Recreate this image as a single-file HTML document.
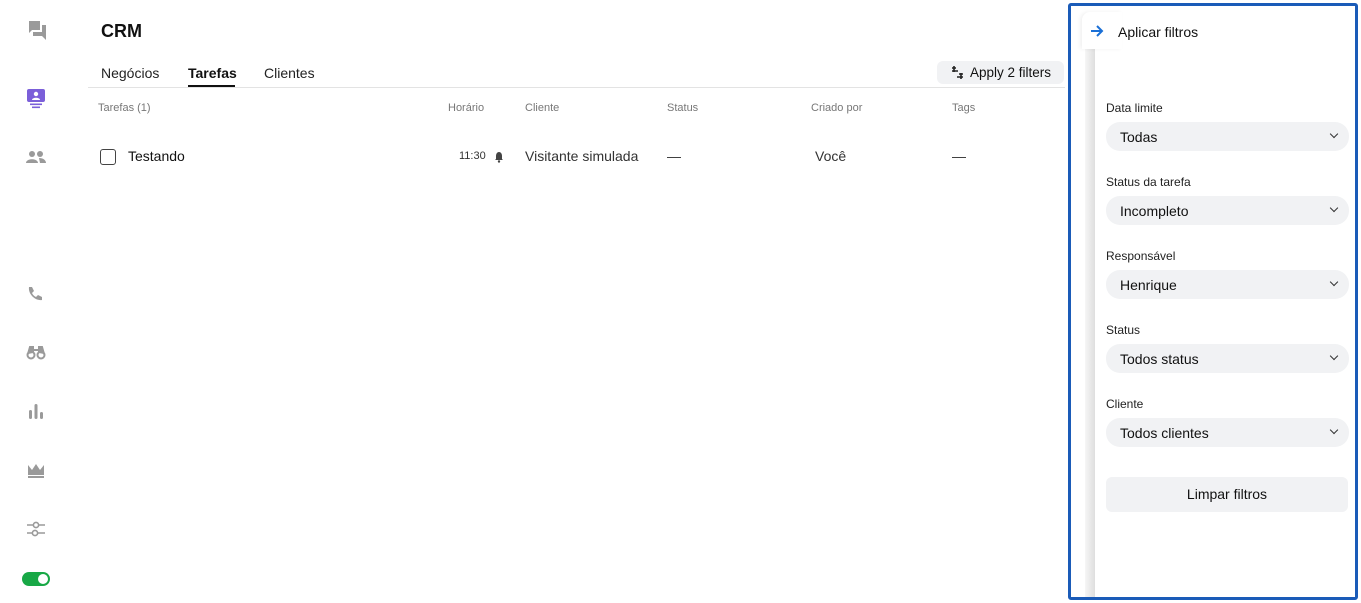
<!DOCTYPE html>
<html><head><meta charset="utf-8"><style>
*{margin:0;padding:0;box-sizing:border-box}
body{width:1361px;height:603px;background:#fff;font-family:"Liberation Sans",sans-serif;position:relative;overflow:hidden;color:#111}
.a{position:absolute}
.ic{position:absolute;left:26px}
.h{font-size:11px;color:#777;top:102px}
.lbl{position:absolute;left:1106px;font-size:12px;color:#222}
.dd{position:absolute;left:1106px;width:243px;height:29px;border-radius:14px;background:#f1f2f4;font-size:14px;padding:7px 14px;color:#111}
.dd:after{content:"";position:absolute;right:12px;top:9px;width:5px;height:5px;border-right:1.6px solid #333;border-bottom:1.6px solid #333;transform:rotate(45deg)}
</style></head><body>
<svg class="ic" style="top:20px" width="22" height="22" viewBox="0 0 22 22"><path d="M1 1h13v9H6l-3 3V1z" fill="#9a9a9a"/><path d="M7 12h9V5h4v15l-4-4H7z" fill="#9a9a9a"/></svg>
<svg class="ic" style="top:88px" width="20" height="22" viewBox="0 0 20 22"><rect x="1" y="1" width="18" height="13" rx="2" fill="#7b5fd9"/><circle cx="10" cy="6" r="2.2" fill="#fff"/><path d="M6 12c0-3 8-3 8 0z" fill="#fff"/><rect x="4" y="15.5" width="12" height="1.6" fill="#7b5fd9"/><rect x="6" y="18.5" width="8" height="1.6" fill="#7b5fd9"/></svg>
<svg class="ic" style="top:150px" width="20" height="14" viewBox="0 0 20 14"><circle cx="6" cy="4" r="3" fill="#9a9a9a"/><circle cx="14" cy="4" r="3" fill="#9a9a9a"/><path d="M0 13c0-5 12-5 12 0zM13 8c4 0 7 2 7 5h-6z" fill="#9a9a9a"/></svg>
<svg class="ic" style="top:285px" width="18" height="18" viewBox="0 0 18 18"><path d="M3 2l3 0 2 4-2 2c1 2 2 3 4 4l2-2 4 2v3c-7 1-14-6-13-13z" fill="#9a9a9a"/></svg>
<svg class="ic" style="top:344px" width="20" height="16" viewBox="0 0 20 16"><circle cx="5" cy="11" r="3.5" fill="none" stroke="#9a9a9a" stroke-width="2"/><circle cx="15" cy="11" r="3.5" fill="none" stroke="#9a9a9a" stroke-width="2"/><path d="M2 10l2-7h3v6M18 10l-2-7h-3v6M7 6h6" stroke="#9a9a9a" stroke-width="2" fill="#9a9a9a"/></svg>
<svg class="ic" style="top:402px" width="20" height="18" viewBox="0 0 20 18"><rect x="3" y="8" width="3" height="9" rx="1.5" fill="#9a9a9a"/><rect x="8.5" y="2" width="3" height="15" rx="1.5" fill="#9a9a9a"/><rect x="14" y="10" width="3" height="7" rx="1.5" fill="#9a9a9a"/></svg>
<svg class="ic" style="top:462px" width="20" height="18" viewBox="0 0 20 18"><path d="M2 3l4 5 4-6 4 6 4-5v10H2z" fill="#9a9a9a"/><rect x="2" y="14" width="16" height="2" fill="#9a9a9a"/></svg>
<svg class="ic" style="top:520px" width="20" height="18" viewBox="0 0 20 18"><path d="M1 5h18M1 13h18" stroke="#9a9a9a" stroke-width="1.6"/><circle cx="10" cy="5" r="2.6" fill="#fff" stroke="#9a9a9a" stroke-width="1.6"/><circle cx="9" cy="13" r="2.6" fill="#fff" stroke="#9a9a9a" stroke-width="1.6"/></svg>
<div class="a" style="left:22px;top:572px;width:28px;height:14px;border-radius:7px;background:#18a846"><div class="a" style="right:2px;top:2px;width:10px;height:10px;border-radius:5px;background:#fff"></div></div>
<div class="a" style="left:101px;top:21px;font-size:18px;font-weight:bold">CRM</div>
<div class="a" style="left:101px;top:65px;font-size:14px;color:#222">Negócios</div>
<div class="a" style="left:188px;top:65px;font-size:14px;font-weight:bold">Tarefas</div>
<div class="a" style="left:188px;top:85px;width:47px;height:2px;background:#111"></div>
<div class="a" style="left:264px;top:65px;font-size:14px;color:#222">Clientes</div>
<div class="a" style="left:88px;top:87px;width:977px;height:1px;background:#e3e3e3"></div>
<div class="a" style="left:937px;top:61px;width:127px;height:23px;border-radius:6px;background:#f1f2f4;font-size:13.5px;padding:4px 0 0 33px;color:#111">Apply 2 filters</div>
<svg class="a" style="left:951px;top:66px" width="13" height="13" viewBox="0 0 13 13"><path d="M1 2h4M1 5h6M8 8h4M6 11h6M3 0v6M10 7v6" stroke="#222" stroke-width="1.6"/></svg>
<div class="a h" style="left:98px">Tarefas (1)</div>
<div class="a h" style="left:448px">Horário</div>
<div class="a h" style="left:525px">Cliente</div>
<div class="a h" style="left:667px">Status</div>
<div class="a h" style="left:811px">Criado por</div>
<div class="a h" style="left:952px">Tags</div>
<div class="a" style="left:100px;top:149px;width:16px;height:16px;border:1.5px solid #444;border-radius:3px"></div>
<div class="a" style="left:128px;top:148px;font-size:14px">Testando</div>
<div class="a" style="left:459px;top:150px;font-size:11px;color:#333">11:30</div>
<svg class="a" style="left:494px;top:151px" width="10" height="12" viewBox="0 0 10 12"><path d="M5 1c2 0 3 2 3 4v3l1 1H1l1-1V5c0-2 1-4 3-4z" fill="#444"/><circle cx="5" cy="10.5" r="1.2" fill="#444"/></svg>
<div class="a" style="left:525px;top:148px;font-size:14px;color:#333">Visitante simulada</div>
<div class="a" style="left:667px;top:148px;font-size:14px;color:#333">—</div>
<div class="a" style="left:815px;top:148px;font-size:14px;color:#333">Você</div>
<div class="a" style="left:952px;top:148px;font-size:14px;color:#333">—</div>
<div class="a" style="left:1068px;top:3px;width:290px;height:597px;border:3px solid #1a5bb8;border-radius:3px;background:#fff"></div>
<div class="a" style="left:1085px;top:48px;width:10px;height:549px;background:linear-gradient(90deg,#f6f6f6,#dedede)"></div>
<div class="a" style="left:1082px;top:12px;width:40px;height:37px;border-radius:8px 0 0 0;background:#fff;box-shadow:-2px 0 4px rgba(0,0,0,.06)"></div>
<svg class="a" style="left:1090px;top:25px" width="14" height="12" viewBox="0 0 14 12"><path d="M1 6h11M7 1l5 5-5 5" stroke="#1a6fd6" stroke-width="2" fill="none"/></svg>
<div class="a" style="left:1118px;top:24px;font-size:14px">Aplicar filtros</div>
<div class="lbl" style="top:101px">Data limite</div><div class="dd" style="top:122px">Todas</div>
<div class="lbl" style="top:175px">Status da tarefa</div><div class="dd" style="top:196px">Incompleto</div>
<div class="lbl" style="top:249px">Responsável</div><div class="dd" style="top:270px">Henrique</div>
<div class="lbl" style="top:323px">Status</div><div class="dd" style="top:344px">Todos status</div>
<div class="lbl" style="top:397px">Cliente</div><div class="dd" style="top:418px">Todos clientes</div>
<div class="a" style="left:1106px;top:477px;width:242px;height:35px;border-radius:6px;background:#f1f2f4;font-size:14px;text-align:center;line-height:35px">Limpar filtros</div>
</body></html>
